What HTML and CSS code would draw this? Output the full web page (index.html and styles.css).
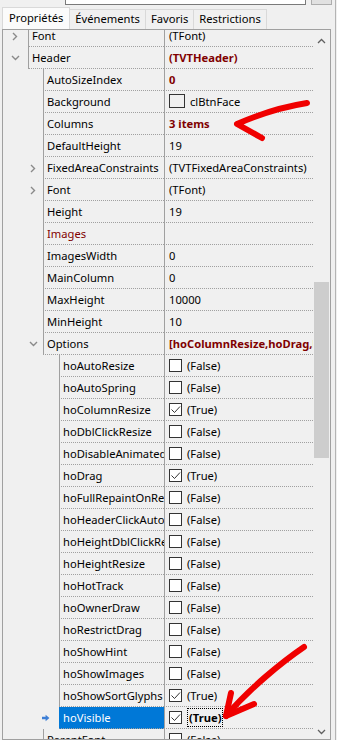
FILE: index.html
```html
<!DOCTYPE html>
<html lang="fr">
<head>
    <meta charset="UTF-8">
    <meta name="viewport" content="width=device-width, initial-scale=1.0">
    <title>Inspecteur d'objets</title>
    <link rel="stylesheet" href="styles.css">
</head>
<body>
    <div class="window">
        <div class="selector">
            <div class="selector-box"></div>
            <div class="selector-btn"></div>
        </div>

        <div class="tabs">
            <div class="tab active">Propriétés</div>
            <div class="tab">Événements</div>
            <div class="tab">Favoris</div>
            <div class="tab">Restrictions</div>
        </div>

        <div class="inspector">
            <div class="grid-view">
                <div class="rows" id="rows">
                    <!-- Rows are rendered from the data below -->
                </div>
            </div>
            <div class="scrollbar">
                <div class="sb-btn up">
                    <svg width="9" height="6" viewBox="0 0 9 6"><path d="M1 5l3.5-3.5L8 5" fill="none" stroke="#606060" stroke-width="1.3"/></svg>
                </div>
                <div class="sb-track"><div class="sb-thumb"></div></div>
                <div class="sb-btn down">
                    <svg width="9" height="6" viewBox="0 0 9 6"><path d="M1 1l3.5 3.5L8 1" fill="none" stroke="#606060" stroke-width="1.3"/></svg>
                </div>
            </div>
        </div>
    </div>

    <!-- hand-drawn annotation arrows -->
    <svg class="annotations" width="337" height="740" viewBox="0 0 337 740">
        <g fill="none" stroke="#f00000" stroke-width="6" stroke-linecap="round" stroke-linejoin="round">
            <path d="M307 103 C288 106 262 113 237 124 L262 138"/>
            <path d="M304 647 C282 662 250 688 226 716"/>
            <path d="M231 693 L226 716 L254 704"/>
        </g>
    </svg>

    <script>
        const Inspector = {
            rows: [
                { level: 0, name: 'Font', value: '(TFont)', expander: 'closed' },
                { level: 0, name: 'Header', value: '(TVTHeader)', bold: true, expander: 'open' },
                { level: 1, name: 'AutoSizeIndex', value: '0', bold: true },
                { level: 1, name: 'Background', value: 'clBtnFace', swatch: true },
                { level: 1, name: 'Columns', value: '3 items', bold: true },
                { level: 1, name: 'DefaultHeight', value: '19' },
                { level: 1, name: 'FixedAreaConstraints', value: '(TVTFixedAreaConstraints)', expander: 'closed' },
                { level: 1, name: 'Font', value: '(TFont)', expander: 'closed' },
                { level: 1, name: 'Height', value: '19' },
                { level: 1, name: 'Images', value: '', link: true },
                { level: 1, name: 'ImagesWidth', value: '0' },
                { level: 1, name: 'MainColumn', value: '0' },
                { level: 1, name: 'MaxHeight', value: '10000' },
                { level: 1, name: 'MinHeight', value: '10' },
                { level: 1, name: 'Options', value: '[hoColumnResize,hoDrag,hoShowSortGlyphs,hoVisible]', bold: true, expander: 'open' },
                { level: 2, name: 'hoAutoResize', check: false },
                { level: 2, name: 'hoAutoSpring', check: false },
                { level: 2, name: 'hoColumnResize', check: true },
                { level: 2, name: 'hoDblClickResize', check: false },
                { level: 2, name: 'hoDisableAnimatedResize', check: false },
                { level: 2, name: 'hoDrag', check: true },
                { level: 2, name: 'hoFullRepaintOnResize', check: false },
                { level: 2, name: 'hoHeaderClickAutoSort', check: false },
                { level: 2, name: 'hoHeightDblClickResize', check: false },
                { level: 2, name: 'hoHeightResize', check: false },
                { level: 2, name: 'hoHotTrack', check: false },
                { level: 2, name: 'hoOwnerDraw', check: false },
                { level: 2, name: 'hoRestrictDrag', check: false },
                { level: 2, name: 'hoShowHint', check: false },
                { level: 2, name: 'hoShowImages', check: false },
                { level: 2, name: 'hoShowSortGlyphs', check: true },
                { level: 2, name: 'hoVisible', check: true, selected: true },
                { level: 1, name: 'ParentFont', check: false }
            ],

            icons: {
                closed: '<svg width="6" height="9" viewBox="0 0 6 9"><path d="M1 1l3.5 3.5L1 8" fill="none" stroke="#8a8a8a" stroke-width="1.4"/></svg>',
                open: '<svg width="9" height="6" viewBox="0 0 9 6"><path d="M1 1l3.5 3.5L8 1" fill="none" stroke="#8a8a8a" stroke-width="1.4"/></svg>',
                marker: '<svg width="8" height="8" viewBox="0 0 8 8"><path d="M0 2.8h3.6V0.8L7.4 4 3.6 7.2V5.2H0z" fill="#3d7fd6"/></svg>',
                tick: '<svg width="11" height="11" viewBox="0 0 11 11"><path d="M1.5 5.5l3 3L10 2.5" fill="none" stroke="#333" stroke-width="1"/></svg>'
            },

            init() {
                const container = document.getElementById('rows');
                container.innerHTML = this.rows.map(row => this.renderRow(row)).join('');
            },

            renderValue(row) {
                if (row.check !== undefined) {
                    const label = row.check ? '(True)' : '(False)';
                    const box = `<span class="check">${row.check ? this.icons.tick : ''}</span>`;
                    if (row.selected) return `${box}<span class="focus">${label}</span>`;
                    return `${box}<span>${label}</span>`;
                }
                if (row.swatch) {
                    return `<span class="swatch"></span><span>${row.value}</span>`;
                }
                return `<span class="${row.bold ? 'modified' : ''}">${row.value}</span>`;
            },

            renderRow(row) {
                let lead = '';
                if (row.expander) lead = this.icons[row.expander];
                if (row.selected) lead = this.icons.marker;

                const classes = ['row', `lvl${row.level}`];
                if (row.selected) classes.push('selected');
                if (row.link) classes.push('link');

                return `
                    <div class="${classes.join(' ')}">
                        <div class="name-col">
                            <div class="indent"><span class="lead">${lead}</span></div>
                            <div class="name">${row.name}</div>
                        </div>
                        <div class="value">${this.renderValue(row)}</div>
                    </div>`;
            }
        };

        Inspector.init();
    </script>
</body>
</html>
```

FILE: styles.css
```css
:root {
    --bg: #f0f0f0;
    --line: #a0a0a0;
    --modified: #800000;
    --select: #0078d7;
}

* { box-sizing: border-box; margin: 0; padding: 0; }

body {
    font-family: "Noto Sans", "Open Sans", sans-serif;
    font-size: 11.2px;
    color: #000;
    background: var(--bg);
    width: 337px;
    height: 740px;
    overflow: hidden;
    position: relative;
}

.window {
    padding-left: 2px;
    width: 336px;
    height: 740px;
    border-right: 1px solid #b4b4b4;
}

/* component selector combo, mostly scrolled out of view */
.selector {
    display: flex;
    height: 5px;
}

.selector-box {
    margin-left: 63px;
    width: 241px;
    background: #fff;
    border: 1px solid #7a7a7a;
    border-top: none;
}

.selector-btn {
    margin-left: 5px;
    width: 21px;
    background: #e1e1e1;
    border: 1px solid #adadad;
    border-top: none;
}

.tabs {
    display: flex;
    align-items: flex-end;
    height: 24px;
    padding-left: 1px;
}

.tab {
    height: 20px;
    line-height: 18px;
    padding: 0 5px;
    border: 1px solid #d9d9d9;
    border-bottom: none;
    margin-left: -1px;
    background: var(--bg);
}

.tab.active {
    height: 22px;
    line-height: 20px;
    padding: 0 6px;
    background: #fbfbfb;
    position: relative;
    z-index: 1;
}

.inspector {
    display: flex;
    width: 329px;
    height: 711px;
    border: 1px solid var(--line);
}

.grid-view {
    flex: 1;
    overflow: hidden;
}

.rows {
    margin-top: -5px;
}

.row {
    display: grid;
    grid-template-columns: 161px 1fr;
    height: 22px;
    white-space: nowrap;
}

.name-col {
    display: flex;
    min-width: 0;
}

.indent {
    flex: none;
    display: flex;
    align-items: center;
}

.lead {
    width: 10px;
    display: flex;
    align-items: center;
    justify-content: center;
}

.lvl0 .indent { width: 25px; padding-left: 7px; }
.lvl1 .indent { width: 40px; padding-left: 25px; }
.lvl2 .indent { width: 56px; padding-left: 38px; }

.name {
    flex: 1;
    min-width: 0;
    overflow: hidden;
    padding-left: 3px;
    line-height: 21px;
    border-left: 1px solid var(--line);
    border-bottom: 1px dotted var(--line);
}

.row.link .name { color: var(--modified); }

.row.selected .name {
    background: var(--select);
    border-left-color: var(--select);
    color: #fff;
}

.value {
    display: flex;
    align-items: center;
    gap: 5px;
    min-width: 0;
    overflow: hidden;
    padding-left: 4px;
    padding-bottom: 1px;
    border-left: 1px solid var(--line);
    border-bottom: 1px dotted var(--line);
}

.modified {
    color: var(--modified);
    font-weight: bold;
}

.check {
    flex: none;
    width: 13px;
    height: 13px;
    border: 1px solid #333;
    background: #fff;
    display: flex;
    align-items: center;
    justify-content: center;
}

.swatch {
    flex: none;
    width: 16px;
    height: 14px;
    border: 1px solid #333;
    background: #f0f0f0;
}

.focus {
    font-weight: bold;
    border: 1px dotted #000;
    padding: 0 1px;
    line-height: 17px;
}

.scrollbar {
    width: 17px;
    display: flex;
    flex-direction: column;
    background: var(--bg);
}

.sb-btn {
    height: 17px;
    display: flex;
    align-items: center;
    justify-content: center;
}

.sb-btn.up { padding-top: 5px; }
.sb-btn.down { padding-top: 2px; }

.sb-track {
    flex: 1;
}

.sb-thumb {
    margin: 235px 1px 0 1px;
    height: 176px;
    background: #cdcdcd;
}

.annotations {
    position: absolute;
    top: 0;
    left: 0;
    pointer-events: none;
}
```
